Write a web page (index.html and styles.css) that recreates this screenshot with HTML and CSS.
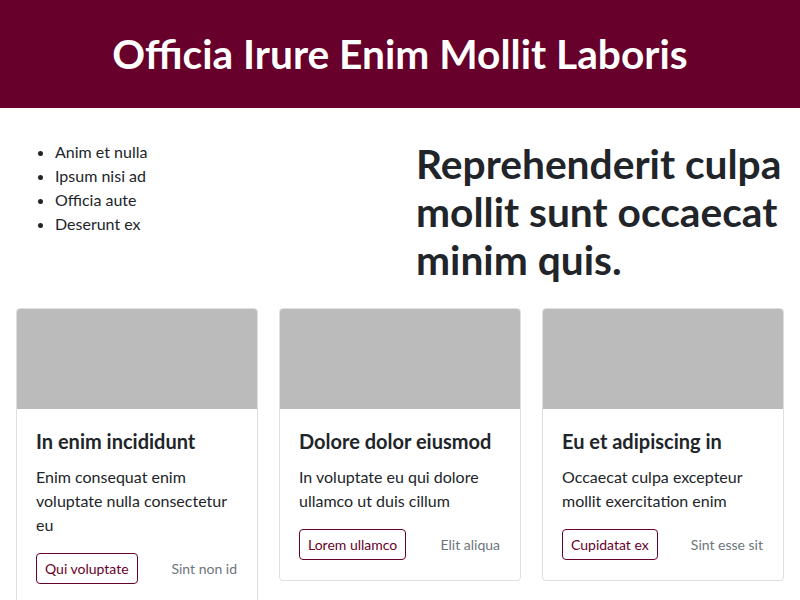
FILE: index.html
```html
<!DOCTYPE html>
<html lang="en">
<head>
<meta charset="utf-8">
<link rel="stylesheet" href="styles.css">
</head>
<body>
<header class="hero">
  <h1 class="hero-title">Officia Irure Enim Mollit Laboris</h1>
</header>
<main class="container">
  <section class="intro">
    <ul class="intro-list">
      <li>Anim et nulla</li>
      <li>Ipsum nisi ad</li>
      <li>Officia aute</li>
      <li>Deserunt ex</li>
    </ul>
    <h2 class="intro-heading">Reprehenderit culpa mollit sunt occaecat minim quis.</h2>
  </section>
  <section class="cards">
    <article class="card">
      <div class="card-img"></div>
      <div class="card-body">
        <h3 class="card-title">In enim incididunt</h3>
        <p class="card-text">Enim consequat enim voluptate nulla consectetur eu</p>
        <div class="card-foot">
          <a class="btn">Qui voluptate</a>
          <span class="muted">Sint non id</span>
        </div>
      </div>
    </article>
    <article class="card">
      <div class="card-img"></div>
      <div class="card-body">
        <h3 class="card-title">Dolore dolor eiusmod</h3>
        <p class="card-text">In voluptate eu qui dolore ullamco ut duis cillum</p>
        <div class="card-foot">
          <a class="btn">Lorem ullamco</a>
          <span class="muted">Elit aliqua</span>
        </div>
      </div>
    </article>
    <article class="card">
      <div class="card-img"></div>
      <div class="card-body">
        <h3 class="card-title">Eu et adipiscing in</h3>
        <p class="card-text">Occaecat culpa excepteur mollit exercitation enim</p>
        <div class="card-foot">
          <a class="btn">Cupidatat ex</a>
          <span class="muted">Sint esse sit</span>
        </div>
      </div>
    </article>
  </section>
</main>
</body>
</html>
```
FILE: styles.css
```css
* { box-sizing: border-box; }
body {
  margin: 0;
  font-family: "Segoe UI", Lato, "Noto Sans", sans-serif;
  font-size: 16px;
  line-height: 1.5;
  color: #212529;
  background: #fff;
}
.hero {
  background: #67002a;
  height: 108px;
  display: flex;
  align-items: center;
  justify-content: center;
}
.hero-title {
  margin: 0;
  color: #fff;
  font-size: 40.7px;
  font-weight: 700;
  line-height: 48px;
}
.container {
  padding: 0 16px;
}
.intro {
  display: grid;
  grid-template-columns: 1fr 1fr;
  padding-top: 32px;
}
.intro-list {
  margin: 0;
  padding-left: 39px;
}
.intro-heading {
  margin: 0;
  padding-left: 16px;
  font-size: 40.7px;
  font-weight: 700;
  line-height: 48px;
}
.cards {
  display: grid;
  grid-template-columns: repeat(3, 1fr);
  gap: 21px;
  margin-top: 24px;
  align-items: start;
}
.card {
  border: 1px solid #dfdfdf;
  border-radius: 4px;
  overflow: hidden;
}
.card-img {
  height: 100px;
  background: #bbbbbb;
}
.card-body {
  padding: 20px 20px 20px 19px;
}
.card-title {
  margin: 0 0 12px;
  font-size: 20px;
  font-weight: 700;
  line-height: 1.2;
}
.card-text {
  margin: 0 0 16px;
}
.card-foot {
  display: flex;
  justify-content: space-between;
  align-items: center;
}
.btn {
  border: 1px solid #67002a;
  border-radius: 4px;
  color: #67002a;
  font-size: 14px;
  padding: 4px 8px;
  line-height: 1.5;
}
.muted {
  color: #6c757d;
  font-size: 14px;
}
```
